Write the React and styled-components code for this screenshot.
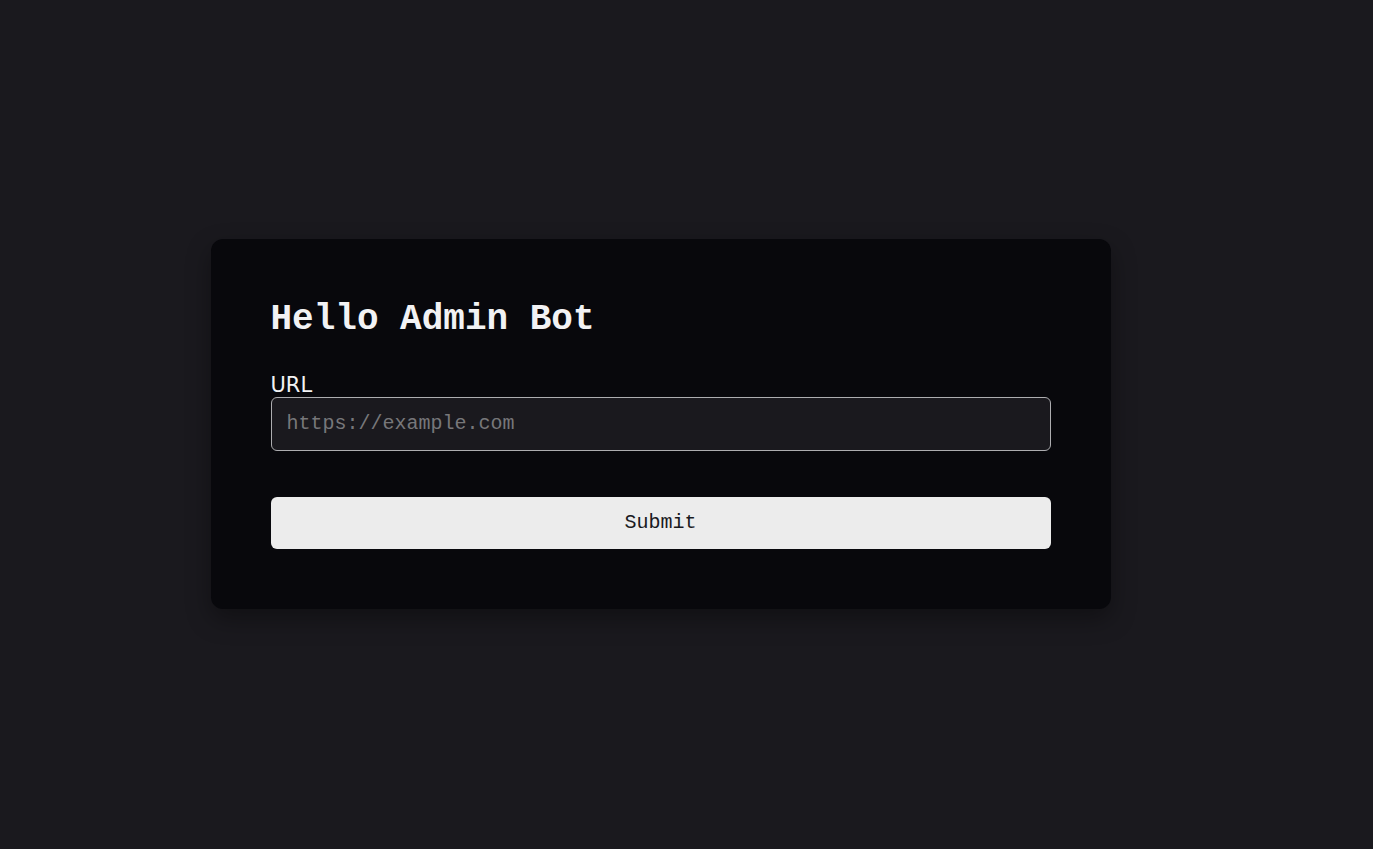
import styled, { createGlobalStyle } from "styled-components";

const GlobalStyle = createGlobalStyle`
  html, body {
    margin: 0;
    padding: 0;
    background: #1a191e;
  }
  * {
    box-sizing: border-box;
  }
`;

const App = () => {
  return (
    <>
      <GlobalStyle />
      <Page>
        <Card>
          <Title>Hello Admin Bot</Title>
          <Form onSubmit={(e) => e.preventDefault()}>
            <Label htmlFor="url">URL</Label>
            <Input id="url" type="text" placeholder="https://example.com" />
            <Button type="submit">Submit</Button>
          </Form>
        </Card>
      </Page>
    </>
  );
};
export default App;

const Page = styled.div`
  min-height: 849px;
  display: flex;
  align-items: center;
  justify-content: center;
  padding: 0 52px 2px 0;
`;
const Card = styled.div`
  width: 900px;
  padding: 60px;
  background: #08080c;
  border-radius: 12px;
  box-shadow: 0 10px 24px rgba(0, 0, 0, 0.35);
`;
const Title = styled.h1`
  margin: 0 0 33px;
  font-family: "Liberation Mono", monospace;
  font-size: 36px;
  font-weight: 700;
  color: #f2f2f4;
`;
const Form = styled.form`
  display: flex;
  flex-direction: column;
`;
const Label = styled.label`
  font-family: "DejaVu Sans", sans-serif;
  font-size: 21px;
  color: #f2f2f4;
  line-height: 24px;
`;
const Input = styled.input`
  height: 54px;
  padding: 0 15px;
  background: #1a191e;
  border: 1px solid #adadb0;
  border-radius: 6px;
  font-family: "Liberation Mono", monospace;
  font-size: 20px;
  color: #eee;
  outline: none;
  &::placeholder {
    color: #77777a;
  }
`;
const Button = styled.button`
  margin-top: 46px;
  height: 52px;
  background: #ececec;
  border: none;
  border-radius: 6px;
  font-family: "Liberation Mono", monospace;
  font-size: 20px;
  color: #1a1a1e;
  cursor: pointer;
`;
